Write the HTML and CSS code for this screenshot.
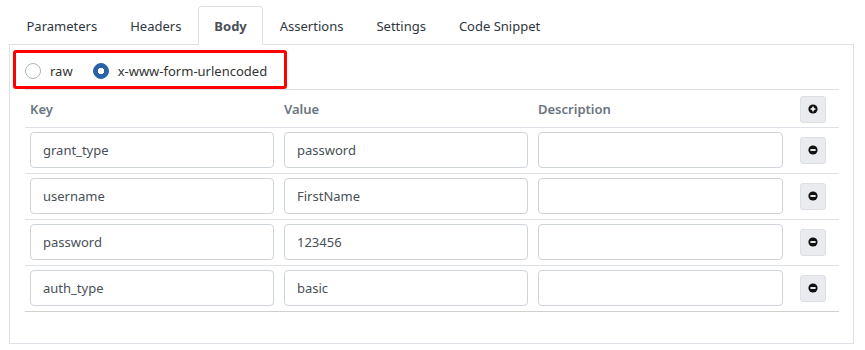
FILE: index.html
```html
<!DOCTYPE html>
<html lang="en">
<head>
    <meta charset="UTF-8">
    <meta name="viewport" content="width=device-width, initial-scale=1.0">
    <title>Request Body</title>
    <link rel="stylesheet" href="styles.css">
</head>
<body>

    <ul class="tabs">
        <li>Parameters</li>
        <li>Headers</li>
        <li class="active">Body</li>
        <li>Assertions</li>
        <li>Settings</li>
        <li>Code Snippet</li>
    </ul>

    <div class="panel">
        <div class="body-type">
            <label class="radio"><span class="dot"></span>raw</label>
            <label class="radio checked"><span class="dot"></span>x-www-form-urlencoded</label>
            <span class="highlight"></span>
        </div>

        <table class="params">
            <thead>
                <tr>
                    <th>Key</th>
                    <th>Value</th>
                    <th>Description</th>
                    <th class="btn-cell">
                        <button class="icon-btn" title="Add">
                            <svg width="10" height="10" viewBox="0 0 10 10"><circle cx="5" cy="5" r="4.6" fill="#111"/><rect x="2.6" y="4.2" width="4.8" height="1.6" fill="#fff"/><rect x="4.2" y="2.6" width="1.6" height="4.8" fill="#fff"/></svg>
                        </button>
                    </th>
                </tr>
            </thead>
            <tbody>
                <tr>
                    <td><input type="text" value="grant_type"></td>
                    <td><input type="text" value="password"></td>
                    <td><input type="text" value=""></td>
                    <td class="btn-cell"><button class="icon-btn" title="Remove"><svg width="10" height="10" viewBox="0 0 10 10"><circle cx="5" cy="5" r="4.6" fill="#111"/><rect x="2.4" y="4.1" width="5.2" height="1.8" fill="#fff"/></svg></button></td>
                </tr>
                <tr>
                    <td><input type="text" value="username"></td>
                    <td><input type="text" value="FirstName"></td>
                    <td><input type="text" value=""></td>
                    <td class="btn-cell"><button class="icon-btn" title="Remove"><svg width="10" height="10" viewBox="0 0 10 10"><circle cx="5" cy="5" r="4.6" fill="#111"/><rect x="2.4" y="4.1" width="5.2" height="1.8" fill="#fff"/></svg></button></td>
                </tr>
                <tr>
                    <td><input type="text" value="password"></td>
                    <td><input type="text" value="123456"></td>
                    <td><input type="text" value=""></td>
                    <td class="btn-cell"><button class="icon-btn" title="Remove"><svg width="10" height="10" viewBox="0 0 10 10"><circle cx="5" cy="5" r="4.6" fill="#111"/><rect x="2.4" y="4.1" width="5.2" height="1.8" fill="#fff"/></svg></button></td>
                </tr>
                <tr>
                    <td><input type="text" value="auth_type"></td>
                    <td><input type="text" value="basic"></td>
                    <td><input type="text" value=""></td>
                    <td class="btn-cell"><button class="icon-btn" title="Remove"><svg width="10" height="10" viewBox="0 0 10 10"><circle cx="5" cy="5" r="4.6" fill="#111"/><rect x="2.4" y="4.1" width="5.2" height="1.8" fill="#fff"/></svg></button></td>
                </tr>
            </tbody>
        </table>
    </div>

</body>
</html>
```

FILE: styles.css
```css
body {
    font-family: "Segoe UI", "Noto Sans", sans-serif;
    font-size: 13px;
    color: #333;
    margin: 0;
    padding: 6px 11px 0 9px;
    background-color: #fff;
}
.tabs {
    list-style: none;
    display: flex;
    margin: 0 0 -1px 1px;
    padding: 0;
}
.tabs li {
    height: 38px;
    line-height: 38px;
    padding: 0 15.5px;
    border: 1px solid transparent;
    border-bottom: none;
    border-radius: 4px 4px 0 0;
    box-sizing: border-box;
    color: #2f3640;
}
.tabs li.active {
    font-weight: bold;
    color: #495057;
    background-color: #fff;
    border-color: #dee2e6;
    height: 39px;
    position: relative;
}
.panel {
    border: 1px solid #dee2e6;
    padding: 0 14px 0 15px;
    height: 300px;
    box-sizing: border-box;
}
.body-type {
    position: relative;
    display: flex;
    align-items: center;
    padding: 18px 0 10px;
}
.radio {
    display: flex;
    align-items: center;
    height: 16px;
    margin-right: 20px;
    color: #333;
}
.radio .dot {
    width: 16px;
    height: 16px;
    box-sizing: border-box;
    border: 1px solid #adb5bd;
    border-radius: 50%;
    margin-right: 9px;
    background-color: #fff;
}
.radio.checked .dot {
    border-color: #2a62aa;
    background-color: #2a62aa;
    background-image: radial-gradient(circle, #fff 0 3px, transparent 3.5px);
}
.highlight {
    position: absolute;
    left: -12px;
    top: 5px;
    width: 274px;
    height: 39px;
    box-sizing: border-box;
    border: 3px solid #f00;
    border-radius: 3px;
}
.params {
    width: 814px;
    border-collapse: collapse;
    table-layout: fixed;
}
.params th,
.params td {
    border-top: 1px solid #dee2e6;
    padding: 4px 5px 5px;
    vertical-align: middle;
}
.params th {
    height: 28px;
    padding-top: 5px;
    padding-bottom: 4px;
    text-align: left;
    font-weight: 600;
    color: #6b7480;
}
.params tbody tr:last-child td {
    border-bottom: 1px solid #cfcfcf;
}
.params th:nth-child(1),
.params th:nth-child(2) {
    width: 244px;
}
.params th:nth-child(3) {
    width: 245px;
}
.params .btn-cell {
    width: 39px;
    text-align: left;
    padding-left: 12px;
    padding-right: 0;
}
.params input {
    width: 100%;
    height: 36px;
    box-sizing: border-box;
    border: 1px solid #ced4da;
    border-radius: 4px;
    padding: 0 12px;
    font-family: inherit;
    font-size: 13px;
    color: #495057;
}
.icon-btn {
    width: 26px;
    height: 27px;
    padding: 0;
    border: 1px solid #dcdfe3;
    border-radius: 3px;
    background-color: #e9ebee;
    display: inline-flex;
    align-items: center;
    justify-content: center;
    vertical-align: middle;
    cursor: pointer;
}
.icon-btn svg {
    display: block;
}
```
